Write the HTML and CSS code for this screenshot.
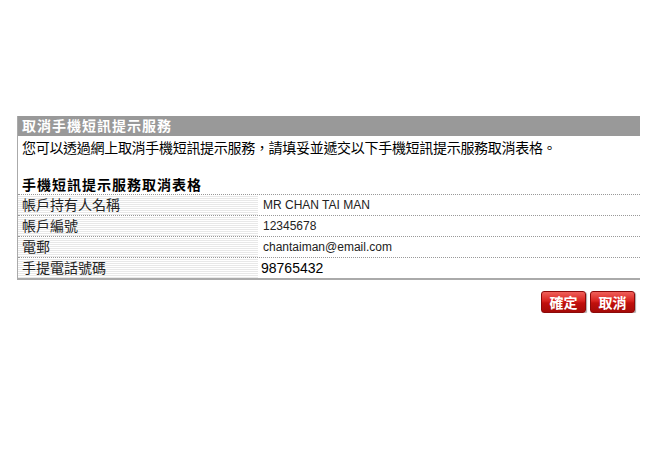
FILE: index.html
```html
<!DOCTYPE html>
<html lang="zh-Hant">

<head>
    <meta charset="UTF-8" />
    <title>取消手機短訊提示服務</title>
    <meta name="viewport" content="width=device-width, initial-scale=1.0" />
    <link rel="stylesheet" href="styles.css">
</head>

<body>
    <div class="page">
        <div class="panel">
            <div class="panel-title">取消手機短訊提示服務</div>
            <p class="intro">您可以透過網上取消手機短訊提示服務，請填妥並遞交以下手機短訊提示服務取消表格。</p>

            <h3 class="form-title">手機短訊提示服務取消表格</h3>
            <div class="form-table">
                <div class="row">
                    <div class="label">帳戶持有人名稱</div>
                    <div class="value">MR CHAN TAI MAN</div>
                </div>
                <div class="row">
                    <div class="label">帳戶編號</div>
                    <div class="value">12345678</div>
                </div>
                <div class="row">
                    <div class="label">電郵</div>
                    <div class="value">chantaiman@email.com</div>
                </div>
                <div class="row last">
                    <div class="label">手提電話號碼</div>
                    <div class="value big">98765432</div>
                </div>
            </div>
        </div>

        <div class="actions">
            <button type="button" class="red-btn">確定</button>
            <button type="button" class="red-btn">取消</button>
        </div>
    </div>
</body>

</html>
```

FILE: styles.css
```css
body {
    margin: 0;
    background: #fff;
    font-family: "Liberation Sans", "Noto Sans CJK TC", sans-serif;
    color: #000;
}

.page {
    width: 623px;
    padding: 116px 0 0 17px;
}

.panel {
    border-left: 1px solid #aaa;
    border-bottom: 2px solid #aaa;
}

.panel-title {
    background: #999;
    color: #fff;
    font-weight: bold;
    font-size: 14px;
    letter-spacing: 1px;
    line-height: 20px;
    height: 20px;
    padding-left: 4px;
}

.intro {
    margin: 0;
    padding: 3px 0 0 4px;
    font-size: 14px;
    letter-spacing: -0.3px;
    line-height: 18px;
}

.form-title {
    margin: 0;
    padding: 19px 0 0 4px;
    font-size: 14px;
    letter-spacing: 1px;
    font-weight: bold;
    line-height: 18px;
}

.form-table {
    border-top: 1px dotted #999;
}

.row {
    display: flex;
    height: 20px;
    border-bottom: 1px dotted #999;
}

.row.last {
    border-bottom: none;
}

.label {
    width: 236px;
    padding-left: 4px;
    font-size: 14px;
    line-height: 20px;
    color: #222;
    background: repeating-linear-gradient(#fff 0 1px, #e8e8e8 1px 2px);
}

.value {
    flex: 1;
    padding-left: 5px;
    font-size: 12px;
    line-height: 20px;
    color: #222;
}

.value.big {
    font-size: 14px;
    padding-left: 3px;
    color: #000;
}

.actions {
    display: flex;
    justify-content: flex-end;
    gap: 4px;
    margin-top: 11px;
    padding-right: 5px;
}

.red-btn {
    width: 45px;
    height: 22px;
    padding: 0;
    border: 1px solid #8c0a0a;
    border-radius: 3px;
    background: linear-gradient(#f0605a 0%, #d8231e 45%, #c0100c 55%, #a50a08 100%);
    color: #fff;
    font-family: "Noto Sans CJK TC", sans-serif;
    font-weight: bold;
    font-size: 14px;
    line-height: 20px;
    box-shadow: 1px 1px 1px rgba(0, 0, 0, 0.35);
    cursor: pointer;
}
```
